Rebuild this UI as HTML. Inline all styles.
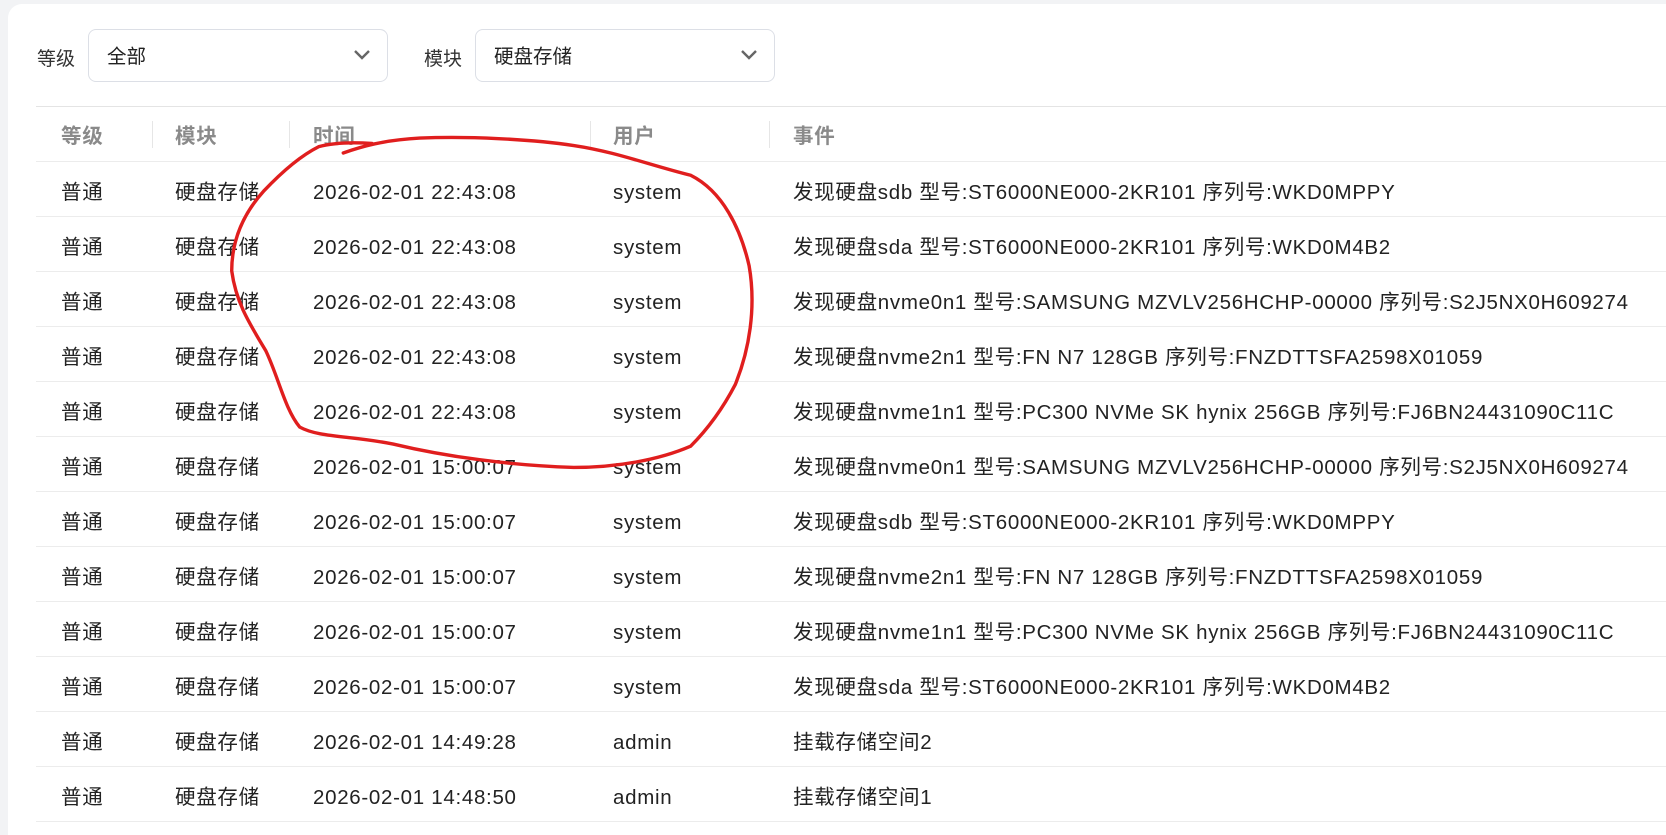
<!DOCTYPE html>
<html><head><meta charset="utf-8"><style>
*{margin:0;padding:0;box-sizing:border-box}
html{width:1666px;height:835px;overflow:hidden}
body{width:1666px;height:835px;background:#f2f3f5;overflow:hidden;position:relative;font-family:"Liberation Sans","Noto Sans CJK SC",sans-serif;color:#222}
.card{position:absolute;left:8px;top:4px;width:1658px;height:831px;background:#fff;border-radius:14px 0 0 0}
.lbl{position:absolute;top:44px;font-size:19px;color:#333}
.sel{position:absolute;top:29px;height:53px;width:300px;border:1px solid #dcdfe6;border-radius:8px;font-size:19.5px;padding:0 0 0 18px;line-height:54px}
.sel svg{position:absolute;right:16px;top:19px}
.tbl{position:absolute;left:36px;top:106px;right:0;border-top:1px solid #e4e4e4}
.row{position:relative;height:55px;border-bottom:1px solid #ececec;font-size:20.5px;letter-spacing:0.7px}
.row span{position:absolute;top:3px;line-height:55px;white-space:nowrap}
.hdr{color:#8a8a8a;font-weight:bold}
.hdr span{top:2px}
.hdr i{position:absolute;top:14px;height:27px;width:1px;background:#e6e6e6}
</style></head><body>
<div class="card"></div>
<div class="lbl" style="left:37px">等级</div>
<div class="sel" style="left:88px">全部<svg width="18" height="12" viewBox="0 0 18 12"><path d="M2 2 L9 9 L16 2" fill="none" stroke="#666" stroke-width="2.4"/></svg></div>
<div class="lbl" style="left:424px">模块</div>
<div class="sel" style="left:475px">硬盘存储<svg width="18" height="12" viewBox="0 0 18 12"><path d="M2 2 L9 9 L16 2" fill="none" stroke="#666" stroke-width="2.4"/></svg></div>
<div class="tbl">
<div class="row hdr"><span style="left:25px">等级</span><i style="left:116px"></i><span style="left:139px">模块</span><i style="left:253px"></i><span style="left:277px">时间</span><i style="left:554px"></i><span style="left:577px">用户</span><i style="left:733px"></i><span style="left:757px">事件</span></div>
<div id="rows"></div>
</div>
<script>
var d=[["2026-02-01 22:43:08","system","发现硬盘sdb 型号:ST6000NE000-2KR101 序列号:WKD0MPPY"],
["2026-02-01 22:43:08","system","发现硬盘sda 型号:ST6000NE000-2KR101 序列号:WKD0M4B2"],
["2026-02-01 22:43:08","system","发现硬盘nvme0n1 型号:SAMSUNG MZVLV256HCHP-00000 序列号:S2J5NX0H609274"],
["2026-02-01 22:43:08","system","发现硬盘nvme2n1 型号:FN N7 128GB 序列号:FNZDTTSFA2598X01059"],
["2026-02-01 22:43:08","system","发现硬盘nvme1n1 型号:PC300 NVMe SK hynix 256GB 序列号:FJ6BN24431090C11C"],
["2026-02-01 15:00:07","system","发现硬盘nvme0n1 型号:SAMSUNG MZVLV256HCHP-00000 序列号:S2J5NX0H609274"],
["2026-02-01 15:00:07","system","发现硬盘sdb 型号:ST6000NE000-2KR101 序列号:WKD0MPPY"],
["2026-02-01 15:00:07","system","发现硬盘nvme2n1 型号:FN N7 128GB 序列号:FNZDTTSFA2598X01059"],
["2026-02-01 15:00:07","system","发现硬盘nvme1n1 型号:PC300 NVMe SK hynix 256GB 序列号:FJ6BN24431090C11C"],
["2026-02-01 15:00:07","system","发现硬盘sda 型号:ST6000NE000-2KR101 序列号:WKD0M4B2"],
["2026-02-01 14:49:28","admin","挂载存储空间2"],
["2026-02-01 14:48:50","admin","挂载存储空间1"]];
var h="";d.forEach(function(r){h+='<div class="row"><span style="left:25px">普通</span><span style="left:139px">硬盘存储</span><span style="left:277px">'+r[0]+'</span><span style="left:577px">'+r[1]+'</span><span style="left:757px">'+r[2]+'</span></div>'});
document.getElementById("rows").innerHTML=h;
</script>
<svg style="position:absolute;left:0;top:0" width="1666" height="835" viewBox="0 0 1568 786">
<path d="M323 144 C340 138 360 132 395 130 C440 128 500 131 540 137 C580 143 610 155 650 165 C680 180 697 215 705 250 C712 290 705 330 692 362 C680 385 665 405 650 420 C620 433 580 440 540 440 C480 438 420 430 370 418 C330 410 300 412 282 402 C268 385 262 355 250 330 C235 305 222 285 218 255 C218 225 230 200 248 180 C265 162 282 147 300 138 C315 134 335 134 350 135" fill="none" stroke="#e01e1e" stroke-width="3.2" stroke-linecap="round"/>
</svg>
</body></html>
